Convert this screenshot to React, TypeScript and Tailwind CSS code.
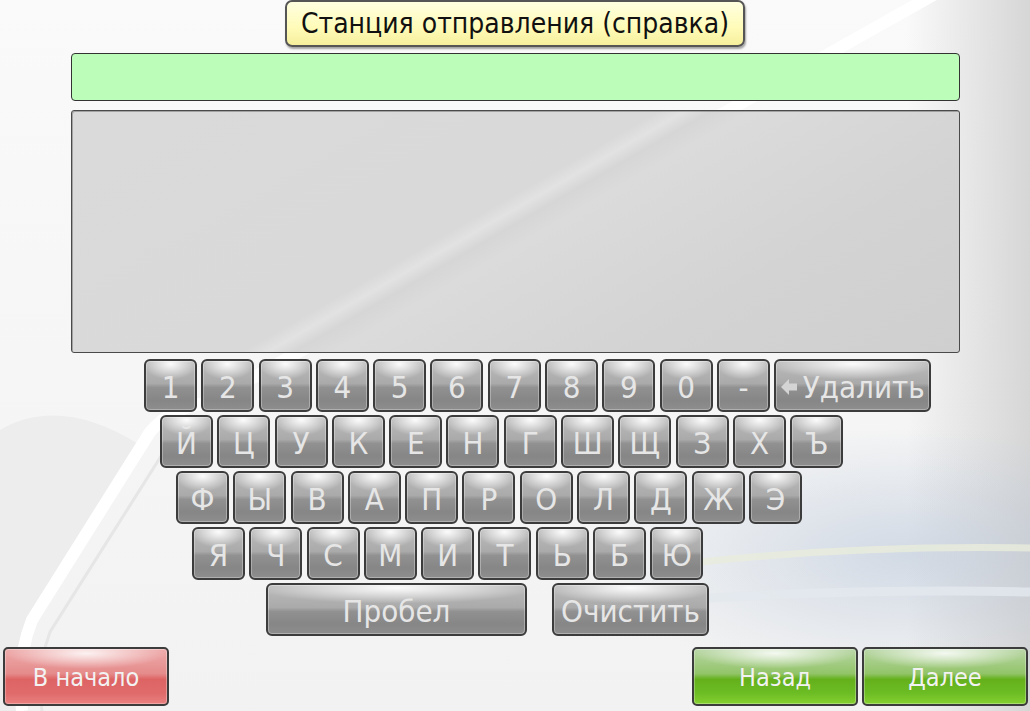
import type { ReactNode } from "react";

const FONT = "font-['Tahoma','DejaVu_Sans_Condensed','DejaVu_Sans',sans-serif]";

const KEY_CLASS =
  "flex h-[53px] shrink-0 items-center justify-center rounded-[6px] border-2 border-[#3c3c3c] pt-[3px] text-[#e6e6e6] shadow-[inset_0_0_0_1px_rgba(255,255,255,0.3)] bg-[radial-gradient(ellipse_55%_32%_at_50%_6%,rgba(255,255,255,0.95),rgba(255,255,255,0)_100%),linear-gradient(to_bottom,#bbbbbb_0%,#aaaaaa_46%,#919191_54%,#868686_80%,#8e8e8e_100%)]";

const ROWS = [
  ["Й", "Ц", "У", "К", "Е", "Н", "Г", "Ш", "Щ", "З", "Х", "Ъ"],
  ["Ф", "Ы", "В", "А", "П", "Р", "О", "Л", "Д", "Ж", "Э"],
  ["Я", "Ч", "С", "М", "И", "Т", "Ь", "Б", "Ю"],
];

const ROW_OFFSETS = ["ml-[160px]", "ml-[176px]", "ml-[192px]"];

function Key({ children, width = "w-[53px]" }: { children: ReactNode; width?: string }) {
  return <button type="button" className={`${KEY_CLASS} ${width} text-[31px] leading-none`}>{children}</button>;
}

function BackArrow() {
  return (
    <svg width="17" height="16" viewBox="0 0 17 16" className="mr-[5px]">
      <polygon points="0,8 8,0 8,4.5 16,4.5 16,11.5 8,11.5 8,16" fill="#d4d4d4" />
    </svg>
  );
}

function NavButton({ label, tone }: { label: string; tone: "red" | "green" }) {
  const toneClass =
    tone === "red"
      ? "bg-[radial-gradient(ellipse_50%_28%_at_50%_8%,rgba(255,255,255,0.85),rgba(255,255,255,0)_100%),linear-gradient(to_bottom,#eeaaaa_0%,#e58b8b_45%,#de6464_55%,#e06a6a_80%,#ea8080_100%)]"
      : "bg-[radial-gradient(ellipse_50%_28%_at_50%_8%,rgba(255,255,255,0.85),rgba(255,255,255,0)_100%),linear-gradient(to_bottom,#b9d6a6_0%,#92c468_45%,#64b01c_55%,#6cbc24_80%,#86d030_100%)]";
  return (
    <button
      type="button"
      className={`flex h-[59px] w-[166px] items-center justify-center rounded-[5px] border-2 border-[#3c3c3c] pt-[2px] text-[25px] text-[#f2f2f2] shadow-[inset_0_0_0_1px_rgba(255,255,255,0.3)] ${toneClass}`}
    >
      {label}
    </button>
  );
}

export default function App() {
  return (
    <div
      className={`relative h-[711px] w-[1030px] overflow-hidden ${FONT} bg-[radial-gradient(ellipse_30%_18%_at_88%_78%,rgba(176,192,214,0.5),rgba(176,192,214,0)_100%),linear-gradient(to_right,rgba(0,0,0,0)_88%,#d6d6d6_100%),linear-gradient(to_bottom,#fafafa_0%,#f2f2f2_100%)]`}
    >
      {/* decorative swoosh behind the page */}
      <svg className="absolute inset-0" width="1030" height="711" viewBox="0 0 1030 711">
        <path d="M0 711 L0 430 Q60 395 140 445 L32 620 Q16 660 22 711 Z" fill="#ededed" />
        <path d="M22 711 Q16 660 32 620 L150 432 Q170 408 210 402 L960 -20" stroke="#ffffff" strokeWidth="12" fill="none" />
        <path d="M42 711 Q36 670 50 632 L170 442" stroke="#e6e6e6" strokeWidth="3" fill="none" />
        <path d="M700 562 Q860 545 1030 548" stroke="#e8ecdc" strokeWidth="7" fill="none" opacity="0.8" />
        <path d="M640 602 Q850 588 1030 592" stroke="#e2e8ee" strokeWidth="9" fill="none" opacity="0.8" />
      </svg>

      <div className="relative flex h-full flex-col">
        <div className="mx-auto flex h-[47px] w-[460px] items-center justify-center rounded-[7px] border-2 border-[#555] bg-[linear-gradient(to_bottom,#ffffe0_0%,#fffbb8_60%,#f5ef9c_100%)] text-[28px] text-[#111] shadow-[1px_2px_2px_rgba(0,0,0,0.35)]">
          Станция отправления (справка)
        </div>

        <div className="ml-[71px] mt-[6px] h-[48px] w-[889px] rounded-[4px] border border-[#333] bg-[#bbfdb9]" />

        <div className="ml-[71px] mt-[9px] h-[243px] w-[889px] rounded-[3px] border border-[#4a4a4a] bg-[linear-gradient(150deg,#dadada_0%,#d9d9d9_45%,#e2e2e2_47%,#d6d6d6_49%,#dbdbdb_52%,#d3d3d3_75%,#cfcfcf_100%)] shadow-[inset_1px_1px_0_rgba(0,0,0,0.25)]" />

        <div className="mt-[6px] flex flex-col gap-[3px]">
          <div className="ml-[144px] flex gap-x-[4.3px]">
            {["1", "2", "3", "4", "5", "6", "7", "8", "9", "0", "-"].map((k) => (
              <Key key={k}>{k}</Key>
            ))}
            <Key width="w-[157px]">
              <BackArrow />
              Удалить
            </Key>
          </div>
          {ROWS.map((row, i) => (
            <div key={i} className={`${ROW_OFFSETS[i]} flex gap-x-[4.3px]`}>
              {row.map((k) => (
                <Key key={k}>{k}</Key>
              ))}
            </div>
          ))}
          <div className="ml-[266px] flex gap-x-[25px]">
            <Key width="w-[261px]">Пробел</Key>
            <Key width="w-[157px]">Очистить</Key>
          </div>
        </div>

        <div className="mt-[11px] flex justify-between pl-[3px] pr-[2px]">
          <NavButton label="В начало" tone="red" />
          <div className="flex gap-[4px]">
            <NavButton label="Назад" tone="green" />
            <NavButton label="Далее" tone="green" />
          </div>
        </div>
      </div>
    </div>
  );
}
